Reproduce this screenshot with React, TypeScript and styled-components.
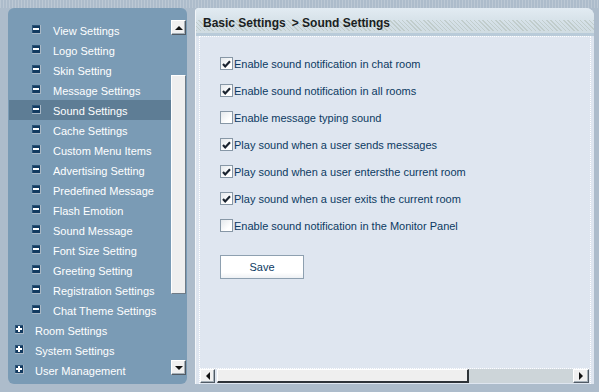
import { createGlobalStyle, styled } from 'styled-components';

const GlobalStyle = createGlobalStyle`
  html, body {
    margin: 0;
    padding: 0;
    background: #adbccb;
  }
  body {
    font-family: "Liberation Sans", Arial, sans-serif;
    font-size: 11px;
  }
`;

const SUB_ITEMS = [
  'View Settings',
  'Logo Setting',
  'Skin Setting',
  'Message Settings',
  'Sound Settings',
  'Cache Settings',
  'Custom Menu Items',
  'Advertising Setting',
  'Predefined Message',
  'Flash Emotion',
  'Sound Message',
  'Font Size Setting',
  'Greeting Setting',
  'Registration Settings',
  'Chat Theme Settings',
];

const TOP_ITEMS = ['Room Settings', 'System Settings', 'User Management'];

const OPTIONS = [
  { label: 'Enable sound notification in chat room', checked: true },
  { label: 'Enable sound notification in all rooms', checked: true },
  { label: 'Enable message typing sound', checked: false },
  { label: 'Play sound when a user sends messages', checked: true },
  { label: 'Play sound when a user entersthe current room', checked: true },
  { label: 'Play sound when a user exits the current room', checked: true },
  { label: 'Enable sound notification in the Monitor Panel', checked: false },
];

function CheckMark() {
  return (
    <svg width="9" height="8" viewBox="0 0 9 8">
      <path d="M1 4 L3.2 6.4 L8 1.2" fill="none" stroke="#1b2430" strokeWidth="2.2" />
    </svg>
  );
}

export default function App() {
  return (
    <>
      <GlobalStyle />
      <Page>
        <LeftPanel>
          <Tree>
            {SUB_ITEMS.map((item) => (
              <Row key={item} $sub $selected={item === 'Sound Settings'}>
                <Toggle $sub>
                  <Bar />
                </Toggle>
                <Label>{item}</Label>
              </Row>
            ))}
            {TOP_ITEMS.map((item) => (
              <Row key={item}>
                <Toggle>
                  <Bar />
                  <Bar $vertical />
                </Toggle>
                <Label>{item}</Label>
              </Row>
            ))}
          </Tree>
          <VScroll>
            <ScrollButton>
              <Arrow $dir="up" />
            </ScrollButton>
            <VTrack>
              <VThumb />
            </VTrack>
            <ScrollButton>
              <Arrow $dir="down" />
            </ScrollButton>
          </VScroll>
        </LeftPanel>

        <RightPanel>
          <Header>
            <Crumb>Basic Settings</Crumb>
            <Crumb>&gt; Sound Settings</Crumb>
          </Header>
          <Body>
            <Inner>
              <Options>
                {OPTIONS.map((opt) => (
                  <Option key={opt.label}>
                    <Box>{opt.checked && <CheckMark />}</Box>
                    {opt.label}
                  </Option>
                ))}
              </Options>
              <SaveButton>Save</SaveButton>
              <Spacer />
              <HScroll>
                <ScrollButton $h>
                  <Arrow $dir="left" />
                </ScrollButton>
                <HThumb />
                <HTrack />
                <ScrollButton $h $wide>
                  <Arrow $dir="right" />
                </ScrollButton>
              </HScroll>
            </Inner>
          </Body>
        </RightPanel>
      </Page>
    </>
  );
}

const Page = styled.div`
  width: 599px;
  height: 392px;
  box-sizing: border-box;
  padding: 8px 5px 8px 8px;
  display: flex;
  gap: 8px;
  background:
    repeating-linear-gradient(90deg, rgba(255, 255, 255, 0.18) 0 1px, transparent 1px 3px) top / 100% 8px no-repeat,
    #adbccb;
`;

const LeftPanel = styled.div`
  width: 179px;
  height: 376px;
  flex-shrink: 0;
  box-sizing: border-box;
  padding: 0 1px 0 1px;
  background: #7a9bb5;
  border-radius: 6px;
  display: flex;
  overflow: hidden;
`;

const Tree = styled.ul`
  list-style: none;
  margin: 0;
  padding: 12px 0 0 0;
  width: 162px;
  flex-shrink: 0;
`;

const Row = styled.li<{ $sub?: boolean; $selected?: boolean }>`
  height: 20px;
  display: flex;
  align-items: center;
  padding-left: ${(p) => (p.$sub ? '23px' : '6px')};
  color: #ffffff;
  white-space: nowrap;
  background: ${(p) => (p.$selected ? '#5e7d95' : 'transparent')};
`;

const Label = styled.span`
  padding-top: 2px;
`;

const Toggle = styled.span<{ $sub?: boolean }>`
  position: relative;
  width: 8px;
  height: 8px;
  margin-right: ${(p) => (p.$sub ? '12px' : '11px')};
  margin-top: -1px;
  background: #123a60;
  border-right: 1px solid #a9b8c6;
  border-bottom: 1px solid #a9b8c6;
  box-shadow: inset 1px 1px 0 #2c5478;
  display: flex;
  align-items: center;
  justify-content: center;
`;

const Bar = styled.span<{ $vertical?: boolean }>`
  position: absolute;
  background: #ffffff;
  width: ${(p) => (p.$vertical ? '2px' : '6px')};
  height: ${(p) => (p.$vertical ? '6px' : '2px')};
`;

const VScroll = styled.div`
  width: 15px;
  box-sizing: border-box;
  padding: 12px 0 9px 0;
  display: flex;
  flex-direction: column;
`;

const VTrack = styled.div`
  flex: 1;
`;

const VThumb = styled.div`
  margin-top: 40px;
  height: 219px;
  box-sizing: border-box;
  background: #efefef;
  border: 1px solid #ffffff;
  border-right-color: #6f7b86;
  border-bottom-color: #6f7b86;
`;

const ScrollButton = styled.div<{ $h?: boolean; $wide?: boolean }>`
  width: ${(p) => (p.$wide ? '16px' : '15px')};
  height: ${(p) => (p.$h ? '14px' : '15px')};
  flex-shrink: 0;
  box-sizing: border-box;
  background: #f0f0f0;
  border: 1px solid #ffffff;
  border-right-color: #505a64;
  border-bottom-color: #505a64;
  box-shadow: inset -1px -1px 0 #a6b0b8;
  display: flex;
  align-items: center;
  justify-content: center;
`;

const Arrow = styled.span<{ $dir: 'up' | 'down' | 'left' | 'right' }>`
  width: 0;
  height: 0;
  border-style: solid;
  border-color: transparent;
  ${(p) =>
    p.$dir === 'up'
      ? 'border-width: 0 4px 4px 4px; border-bottom-color: #111;'
      : p.$dir === 'down'
        ? 'border-width: 4px 4px 0 4px; border-top-color: #111;'
        : p.$dir === 'left'
          ? 'border-width: 4px 4px 4px 0; border-right-color: #111;'
          : 'border-width: 4px 0 4px 4px; border-left-color: #111;'}
`;

const RightPanel = styled.div`
  flex: 1;
  height: 376px;
  display: flex;
  flex-direction: column;
  border-radius: 4px 8px 0 0;
  overflow: hidden;
  background: #dfe6f0;
`;

const Header = styled.div`
  height: 28px;
  flex-shrink: 0;
  box-sizing: border-box;
  padding: 2px 0 0 7px;
  display: flex;
  align-items: center;
  gap: 6px;
  border-left: 1px solid #f3f6f9;
  background:
    linear-gradient(#b9cbd9, #b9cbd9) bottom / 100% 3px no-repeat,
    repeating-linear-gradient(45deg, rgba(180, 192, 186, 0.6) 0 1px, transparent 1px 3px) 0 12px / 100% 11px no-repeat,
    linear-gradient(#e2ebf2, #d3dfe6 60%, #cfdbe1);
`;

const Crumb = styled.span`
  font-weight: bold;
  font-size: 12px;
  color: #1a1e22;
`;

const Body = styled.div`
  flex: 1;
  display: flex;
  padding: 0 3px 0 3px;
  border-left: 1px solid #f3f6f9;
`;

const Inner = styled.div`
  flex: 1;
  display: flex;
  flex-direction: column;
  border-left: 1px dotted #ffffff;
  border-right: 1px dotted #ffffff;
  border-top: 1px dotted #ffffff;
  padding-top: 13px;
`;

const Options = styled.div`
  display: flex;
  flex-direction: column;
`;

const Option = styled.label`
  height: 27px;
  display: flex;
  align-items: center;
  padding-left: 20px;
  color: #0c3a62;
  white-space: nowrap;
`;

const Box = styled.span`
  width: 13px;
  height: 13px;
  box-sizing: border-box;
  margin-right: 1px;
  background: linear-gradient(135deg, #e4e8ec, #ffffff 70%);
  border: 1px solid #8797a6;
  display: flex;
  align-items: center;
  justify-content: center;
`;

const SaveButton = styled.button`
  margin: 16px 0 0 20px;
  width: 84px;
  height: 24px;
  box-sizing: border-box;
  border: 1px solid #8ea0b0;
  background: linear-gradient(#ffffff 75%, #eef1f4);
  color: #0c3a62;
  font-family: "Liberation Sans", Arial, sans-serif;
  font-size: 11px;
  padding: 0;
`;

const Spacer = styled.div`
  flex: 1;
`;

const HScroll = styled.div`
  height: 14px;
  margin: 0 1px 1px 0;
  display: flex;
  border-top: 1px dotted #ffffff;
`;

const HThumb = styled.div`
  width: 252px;
  margin-left: 2px;
  box-sizing: border-box;
  background: #efefef;
  border: 1px solid #ffffff;
  border-right: 2px solid #2e3338;
  border-bottom: 2px solid #2e3338;
`;

const HTrack = styled.div`
  flex: 1;
  background: #cdd5d9;
`;
